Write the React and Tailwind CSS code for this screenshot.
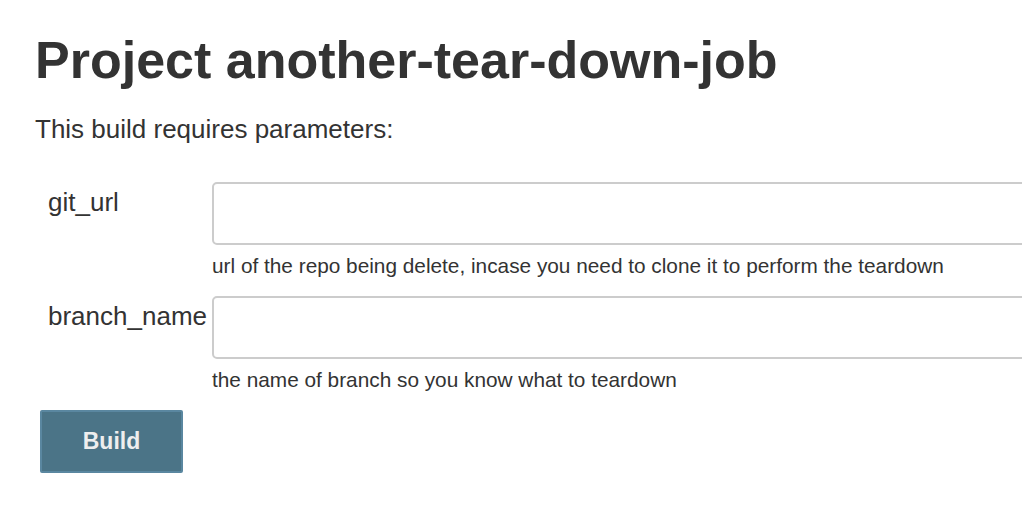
export default function App() {
  const params = [
    { name: 'git_url', help: 'url of the repo being delete, incase you need to clone it to perform the teardown' },
    { name: 'branch_name', help: 'the name of branch so you know what to teardown' },
  ];

  return (
    <div className="w-[1022px] h-[522px] overflow-hidden bg-white text-[#333] font-['Liberation_Sans',Arial,sans-serif]">
      <div className="pl-[35px] pt-[28px]">
        <h1 className="text-[52px] font-bold leading-[64px]">Project another-tear-down-job</h1>
        <p className="mt-[22px] text-[26px] leading-[30px]">This build requires parameters:</p>

        {/* parameter table */}
        <div className="mt-[38px] w-[1200px]">
          {params.map((p) => (
            <div key={p.name} className="flex pl-[13px]">
              <div className="w-[164px] shrink-0 pt-[5px] text-[26px] leading-[30px]">{p.name}</div>
              <div className="flex-1">
                <input
                  type="text"
                  className="block w-full h-[63px] border-2 border-[#ccc] rounded-[5px] bg-white"
                />
                <p className="mt-[9px] mb-[18px] text-[20.8px] leading-[24px]">{p.help}</p>
              </div>
            </div>
          ))}
        </div>

        <button className="ml-[5px] w-[143px] h-[63px] bg-[#4b7487] border-2 border-[#5a87a0] rounded-[2px] text-[#eee] text-[23px] font-bold">
          Build
        </button>
      </div>
    </div>
  );
}
